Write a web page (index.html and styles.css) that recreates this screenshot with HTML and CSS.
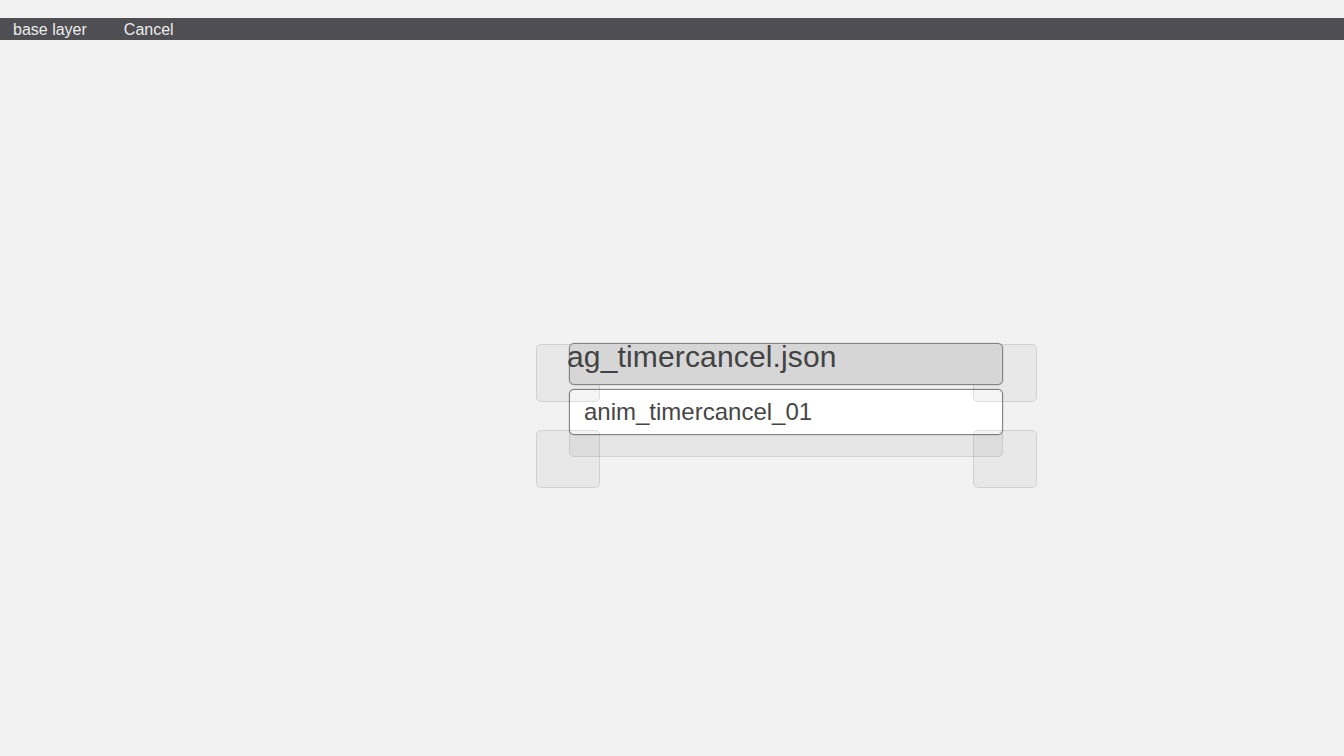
FILE: index.html
```html
<!DOCTYPE html>
<html>
<head>
<meta charset="utf-8">
<link rel="stylesheet" href="styles.css">
</head>
<body>
<div class="page">
  <div class="menubar">
    <span class="menu-item">base layer</span>
    <span class="menu-item">Cancel</span>
  </div>
  <div class="canvas">
    <div class="node-group">
      <div class="node-shadow"></div>
      <div class="node-body"><span class="body-text">anim_timercancel_01</span></div>
      <div class="handle handle-tl"></div>
      <div class="handle handle-tr"></div>
      <div class="handle handle-bl"></div>
      <div class="handle handle-br"></div>
      <div class="node-header"><span class="header-text">ag_timercancel.json</span></div>
    </div>
  </div>
</div>
</body>
</html>
```
FILE: styles.css
```css
html, body {
  margin: 0;
  padding: 0;
  background: #f2f2f2;
  font-family: "Liberation Sans", Arial, sans-serif;
}
.page {
  width: 1344px;
  height: 756px;
  display: flex;
  flex-direction: column;
  padding-top: 18px;
  box-sizing: border-box;
}
.menubar {
  height: 22px;
  background: #4e4e53;
  display: flex;
  align-items: center;
  gap: 37px;
  padding-left: 13px;
  color: #ececec;
  font-size: 16px;
  line-height: 22px;
}
.menu-item {
  padding-top: 2px;
}
.canvas {
  position: relative;
  flex: 1;
}
.node-group {
  position: absolute;
  left: 536px;
  top: 303px;
  width: 501px;
  height: 145px;
}
.node-shadow {
  position: absolute;
  left: 33px;
  top: 46px;
  width: 434px;
  height: 68px;
  box-sizing: border-box;
  background: #e6e6e6;
  border: 1px solid #d3d3d3;
  border-radius: 5px;
}
.node-body {
  position: absolute;
  left: 33px;
  top: 46px;
  width: 434px;
  height: 46px;
  box-sizing: border-box;
  background: #ffffff;
  border: 1px solid #858585;
  border-radius: 5px;
  box-shadow: 0 0 0 0.5px rgba(0, 0, 0, 0.15);
  display: flex;
  align-items: center;
  padding-left: 14px;
}
.body-text {
  font-size: 24px;
  line-height: 24px;
  color: #464646;
  margin-top: -1px;
}
.handle {
  position: absolute;
  width: 64px;
  height: 58px;
  box-sizing: border-box;
  background: rgba(0, 0, 0, 0.04);
  border: 1px solid rgba(0, 0, 0, 0.1);
  border-radius: 5px;
}
.handle-tl { left: 0; top: 1px; }
.handle-tr { right: 0; top: 1px; }
.handle-bl { left: 0; top: 87px; }
.handle-br { right: 0; top: 87px; }
.node-header {
  position: absolute;
  left: 33px;
  top: 0;
  width: 434px;
  height: 42px;
  box-sizing: border-box;
  background: #d6d6d6;
  border: 1px solid #858585;
  border-radius: 5px;
  box-shadow: 0 0 0 0.5px rgba(0, 0, 0, 0.15);
}
.header-text {
  position: absolute;
  left: -3px;
  top: -2px;
  font-size: 30px;
  line-height: 30px;
  letter-spacing: 0.15px;
  color: #434343;
  white-space: nowrap;
}
```
